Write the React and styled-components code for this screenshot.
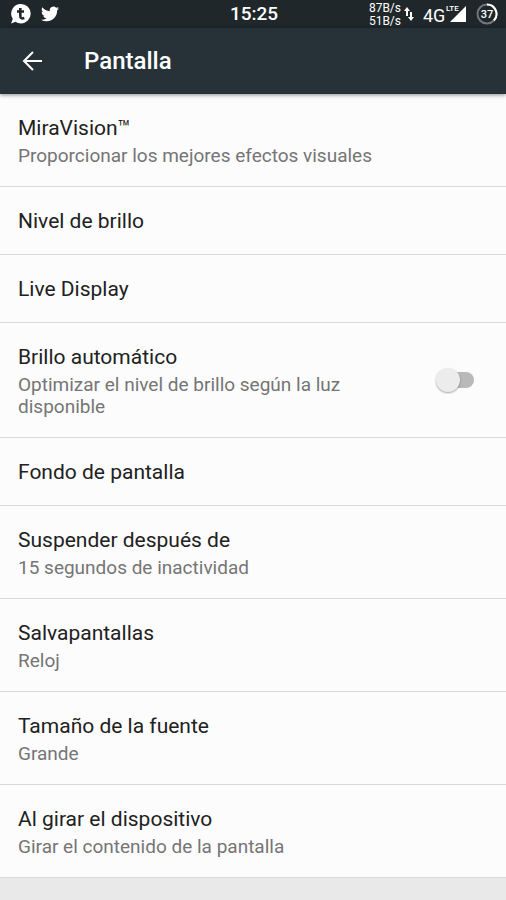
import styled, {createGlobalStyle} from 'styled-components'
import {useState} from "react";

const GlobalStyle = createGlobalStyle`
* {
box-sizing: border-box;
}
body {
margin: 0;
background: #e9e9e9;
font-family: Roboto, sans-serif;
}
`
const Container = styled.div`
display: flex;
`
const StatusBar = styled(Container)`
height: 28px;
padding: 0 8px 0 10px;
background: #1f272b;
color: #fff;
align-items: center;
`
const StatusSide = styled(Container)`
flex: 1 1 0;
align-items: center;
justify-content: ${props => props.$end ? 'flex-end' : 'flex-start'};
gap: ${props => props.$end ? '9px' : '10px'};
`
const Traffic = styled(Container)`
align-items: center;
gap: 3px;
`
const Clock = styled.time`
font-size: 19px;
font-weight: 500;
line-height: 28px;
`
const Speed = styled(Container)`
flex-direction: column;
align-items: flex-end;
padding-top: 2px;
font-size: 12px;
line-height: 13px;
`
const Toolbar = styled.header`
display: flex;
align-items: center;
gap: 40px;
height: 66px;
padding: 0 22px;
background: #263238;
color: #fff;
box-shadow: 0 1px 4px rgba(0, 0, 0, .45);
position: relative;
`
const BackButton = styled.button`
display: flex;
padding: 0;
border: 0;
background: none;
color: inherit;
cursor: pointer;
`
const Heading = styled.h1`
margin: 0;
font-size: 24px;
font-weight: 500;
line-height: 28px;
`
const List = styled.ul`
margin: 0;
padding: 0;
list-style: none;
background: #fcfcfc;
`
const Item = styled.li`
border-bottom: 1px solid #d9d9d9;
`
const Row = styled.button`
display: flex;
align-items: center;
width: 100%;
padding: 0 32px 0 18px;
border: 0;
background: none;
font-family: inherit;
text-align: left;
cursor: pointer;
`
const InfoContainer = styled.span`
display: flex;
flex: 1 1 0;
flex-direction: column;
gap: 3px;
padding: 20px 0 19px;
`
const Title = styled.span`
color: #212121;
font-size: 21px;
line-height: 28px;
`
const Summary = styled.span`
color: #757575;
font-size: 19px;
line-height: 22px;
`
const Switch = styled.input`
appearance: none;
flex: none;
position: relative;
width: 34px;
height: 16px;
margin: 0 0 0 80px;
border-radius: 8px;
background: ${props => props.checked ? '#80cbc4' : '#b9b9b9'};
cursor: pointer;

&::before {
content: '';
position: absolute;
top: -4px;
left: ${props => props.checked ? '14px' : '-4px'};
width: 24px;
height: 24px;
border-radius: 50%;
background: ${props => props.checked ? '#009688' : '#ececec'};
box-shadow: 0 1px 2px rgba(0, 0, 0, .35);
}
`

const settings = [
    {title: 'MiraVision™', summary: 'Proporcionar los mejores efectos visuales'},
    {title: 'Nivel de brillo'},
    {title: 'Live Display'},
    {title: 'Brillo automático', summary: 'Optimizar el nivel de brillo según la luz disponible', toggle: true},
    {title: 'Fondo de pantalla'},
    {title: 'Suspender después de', summary: '15 segundos de inactividad'},
    {title: 'Salvapantallas', summary: 'Reloj'},
    {title: 'Tamaño de la fuente', summary: 'Grande'},
    {title: 'Al girar el dispositivo', summary: 'Girar el contenido de la pantalla'},
]

function ChatIcon() {
    return (
        <svg width="21" height="20" viewBox="0 0 21 20">
            <path fill="#fff" d="M11 0a9.700 9.700 0 0 1 0 19.400c-2 0-3.800-.6-5.400-1.600L1 19.600l1.800-4.600A9.700 9.700 0 0 1 11 0Z" />
            <path fill="none" stroke="#1f272b" strokeWidth="2.600" d="M10.300 4v8c0 2.200 1.500 2.900 4 2.100M7 7.500h7" />
        </svg>
    )
}

function BirdIcon() {
    return (
        <svg width="18" height="18" viewBox="0 0 24 24">
            <path fill="#fff" d="M23.950 4.570a10 10 0 0 1-2.820.770 4.960 4.960 0 0 0 2.160-2.720c-.950.550-2 .950-3.130 1.180a4.920 4.920 0 0 0-8.380 4.480C7.690 8.100 4.070 6.130 1.640 3.160a4.820 4.820 0 0 0-.670 2.480c0 1.710.870 3.210 2.190 4.100a4.900 4.900 0 0 1-2.230-.620v.060a4.920 4.920 0 0 0 3.950 4.830 5 5 0 0 1-2.210.080 4.940 4.940 0 0 0 4.600 3.420A9.870 9.870 0 0 1 0 19.540a14 14 0 0 0 7.550 2.210c9.050 0 14-7.500 14-13.980 0-.210 0-.420-.020-.630a9.940 9.940 0 0 0 2.420-2.570Z" />
        </svg>
    )
}

function ArrowsIcon() {
    return (
        <svg width="10" height="16" viewBox="0 0 10 16">
            <path fill="none" stroke="#fff" strokeWidth="2" d="M3 10V3M7 6v7" />
            <path fill="#fff" d="M3 1l3 4H0ZM7 15l3-4H4Z" />
        </svg>
    )
}

function SignalIcon() {
    return (
        <svg width="44" height="26" viewBox="0 0 44 26">
            <path fill="#fff" d="M43 5v16H27Z" />
            <path fill="#1f272b" d="M24 3h13v8H24Z" />
            <text x="0" y="21" fill="#fff" fontSize="18">4G</text>
            <text x="23" y="10" fill="#fff" fontSize="8" fontWeight="500">LTE</text>
        </svg>
    )
}

function BatteryIcon() {
    return (
        <svg width="22" height="22" viewBox="0 0 22 22">
            <circle cx="11" cy="11" r="9.500" fill="none" stroke="#727779" strokeWidth="2" />
            <path fill="none" stroke="#fff" strokeWidth="2" d="M11 1.500a9.500 9.500 0 0 1 6.900 16" />
            <text x="11" y="15" fill="#fff" fontSize="11" fontWeight="500" textAnchor="middle">37</text>
        </svg>
    )
}

function Setting(props) {
    const [on, setOn] = useState(false)
    return (
        <Item>
            <Row as={props.toggle ? 'label' : 'button'}>
                <InfoContainer>
                    <Title>{props.title}</Title>
                    {props.summary && <Summary>{props.summary}</Summary>}
                </InfoContainer>
                {props.toggle && <Switch type="checkbox" checked={on} onChange={e => setOn(e.target.checked)} />}
            </Row>
        </Item>
    )
}

export default function App() {
    return (
        <>
            <GlobalStyle />
            <StatusBar>
                <StatusSide>
                    <ChatIcon />
                    <BirdIcon />
                </StatusSide>
                <Clock>15:25</Clock>
                <StatusSide $end>
                    <Traffic>
                        <Speed>
                            <span>87B/s</span>
                            <span>51B/s</span>
                        </Speed>
                        <ArrowsIcon />
                    </Traffic>
                    <SignalIcon />
                    <BatteryIcon />
                </StatusSide>
            </StatusBar>
            <Toolbar>
                <BackButton aria-label="Atrás">
                    <svg width="22" height="20" viewBox="0 0 22 20">
                        <path fill="none" stroke="#fff" strokeWidth="2" d="M11 1 2 10l9 9M2 10h18" />
                    </svg>
                </BackButton>
                <Heading>Pantalla</Heading>
            </Toolbar>
            <List>
                {settings.map(item => <Setting key={item.title} {...item} />)}
            </List>
        </>
    )
}
